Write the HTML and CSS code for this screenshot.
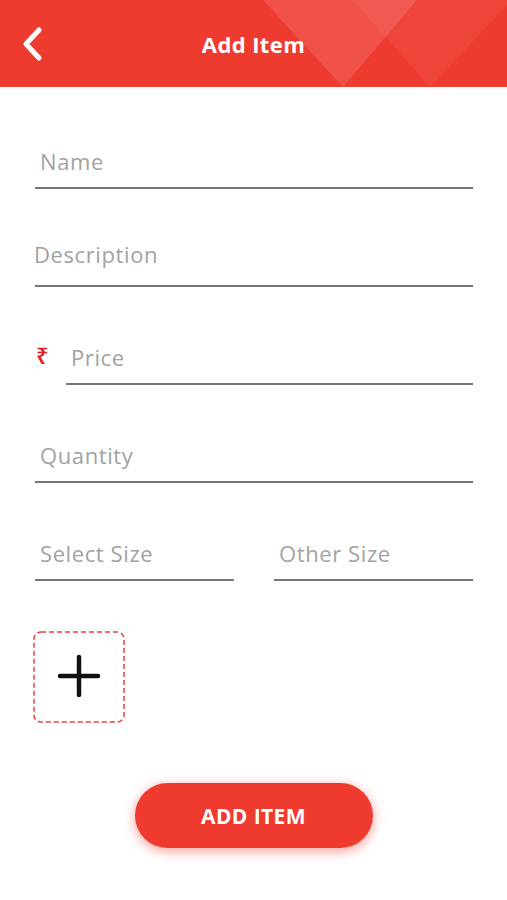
FILE: index.html
```html
<!DOCTYPE html>
<html lang="en">
<head>
  <meta charset="UTF-8">
  <title>Add Item</title>
  <link rel="stylesheet" href="styles.css">
</head>
<body>
  <header class="topbar">
    <svg class="topbar-deco" width="507" height="87" viewBox="0 0 507 87">
      <polygon points="263,0 417,0 343,87" fill="#ffffff" fill-opacity="0.12"/>
      <polygon points="353,0 507,0 507,5 430,87" fill="#ffffff" fill-opacity="0.05"/>
    </svg>
    <a class="back" href="#">
      <svg width="24" height="40" viewBox="0 0 24 40">
        <path d="M18 5 L5 19 L18 33" fill="none" stroke="#fff" stroke-width="5" stroke-linecap="round" stroke-linejoin="round"/>
      </svg>
    </a>
    <h1>Add Item</h1>
  </header>

  <form class="item-form">
    <div class="field field-name"><span class="hint">Name</span></div>
    <div class="field field-desc"><span class="hint">Description</span></div>

    <!-- price with rupee sign -->
    <div class="price-row">
      <span class="rupee">₹</span>
      <div class="field field-price"><span class="hint">Price</span></div>
    </div>

    <div class="field field-name"><span class="hint">Quantity</span></div>

    <div class="size-row">
      <div class="field field-name"><span class="hint">Select Size</span></div>
      <div class="field field-other"><span class="hint">Other Size</span></div>
    </div>

    <div class="photo-add">
      <svg width="92" height="92" viewBox="0 0 92 92">
        <rect x="1" y="1" width="90" height="90" rx="7" fill="none" stroke="#e8413a" stroke-width="1.5" stroke-dasharray="5 3"/>
        <path d="M27 45 H65 M46 26 V64" stroke="#111" stroke-width="4.5" stroke-linecap="round"/>
      </svg>
    </div>

    <div class="actions">
      <button type="button">ADD ITEM</button>
    </div>
  </form>
</body>
</html>
```

FILE: styles.css
```css
body {margin:0; padding:0; width:507px; background:#fff; font-family:"Open Sans", "Noto Sans", sans-serif; color:#333;}
.topbar {position:relative; height:87px; background:#ee3b30; display:flex; align-items:center; justify-content:center; overflow:hidden;}
.topbar-deco {position:absolute; left:0; top:0;}
.topbar h1 {position:relative; margin:1px 0 0 0; color:#fff; font-size:22px; font-weight:700; letter-spacing:0.4px;}
.back {position:absolute; left:21px; top:25px; display:block; line-height:0;}
/* form */
.item-form {padding:59px 34px 40px 35px; display:flex; flex-direction:column; gap:55px;}
.field {border-bottom:2px solid #777; padding-bottom:11px;}
.hint {display:block; line-height:30px; font-size:22px; letter-spacing:0.6px; color:#a2a2a2;}
.field-name .hint {padding-left:5px;}
.field-other .hint {padding-left:5px;}
.field-desc .hint {line-height:20px; margin-left:-1px;}
.field-desc {padding-bottom:21px;}
.price-row {display:flex; align-items:flex-start;}
.rupee {width:30px; line-height:26px; padding-left:1px; font-family:"Noto Sans", "DejaVu Sans", sans-serif; font-size:22px; font-weight:600; color:#e0201b;}
.field-price {flex:1;}
.field-price .hint {padding-left:5px;}
.size-row {display:grid; grid-template-columns:1fr 1fr; gap:40px;}
.photo-add {margin:-5px 0 0 -2px; width:92px; height:92px; line-height:0;}
.actions {display:flex; justify-content:center; margin-top:5px; padding-right:1px;}
.actions button {width:238px; height:65px; border:none; border-radius:33px; background:#ee3a2f; color:#fff; font-family:"Open Sans", sans-serif; font-size:21px; font-weight:700; letter-spacing:0.4px; cursor:pointer; box-shadow:0 3px 12px rgba(238,58,47,0.5);}
```
